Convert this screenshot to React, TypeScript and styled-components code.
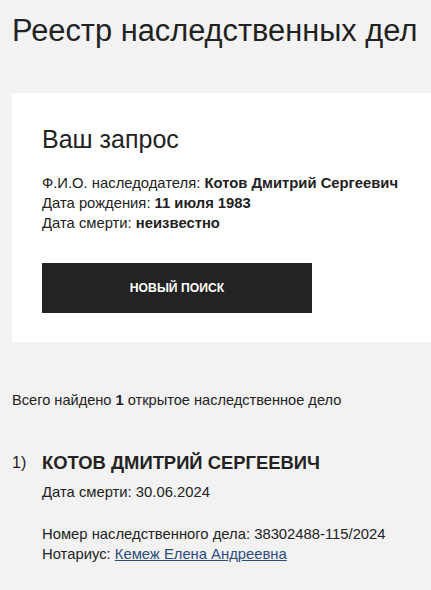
import styled, { createGlobalStyle } from "styled-components";

const GlobalStyle = createGlobalStyle`
  html, body {
    margin: 0;
    padding: 0;
    background: #f2f2f2;
  }
  body {
    font-family: "Liberation Sans", Arial, sans-serif;
    color: #222;
  }
`;

const Page = styled.div`
  padding: 12px 0 30px 12px;
`;

const Title = styled.h1`
  margin: 0;
  font-size: 30.8px;
  font-weight: 400;
  line-height: 38px;
`;

const Card = styled.section`
  margin-top: 43px;
  background: #fff;
  padding: 30px 30px 29px 30px;
`;

const CardTitle = styled.h2`
  margin: 0;
  font-size: 25px;
  font-weight: 400;
  line-height: 32px;
`;

const InfoList = styled.div`
  margin-top: 18px;
  font-size: 14.8px;
  line-height: 20px;
`;

const InfoRow = styled.div`
  b {
    font-weight: 700;
  }
`;

const Button = styled.button`
  margin-top: 30px;
  display: flex;
  align-items: center;
  justify-content: center;
  width: 270px;
  height: 50px;
  border: none;
  background: #232323;
  color: #fff;
  font-family: inherit;
  font-size: 12.2px;
  font-weight: 700;
  text-transform: uppercase;
  cursor: pointer;
`;

const Summary = styled.p`
  margin: 48px 0 0;
  font-size: 14.6px;
  line-height: 20px;
`;

const CaseItem = styled.div`
  margin-top: 40px;
  display: grid;
  grid-template-columns: 30px 1fr;
`;

const Num = styled.div`
  font-size: 16px;
  line-height: 26px;
`;

const CaseName = styled.div`
  font-size: 18.4px;
  font-weight: 700;
  line-height: 26px;
  text-transform: uppercase;
`;

const CaseLine = styled.div<{ $gap?: number }>`
  margin-top: ${(p) => p.$gap ?? 0}px;
  font-size: 14.8px;
  line-height: 20px;
`;

const NotaryLink = styled.a`
  color: #2b4d7e;
  text-decoration: underline;
`;

export default function App() {
  return (
    <>
      <GlobalStyle />
      <Page>
        <Title>Реестр наследственных дел</Title>
        <Card>
          <CardTitle>Ваш запрос</CardTitle>
          <InfoList>
            <InfoRow>
              Ф.И.О. наследодателя: <b>Котов Дмитрий Сергеевич</b>
            </InfoRow>
            <InfoRow>
              Дата рождения: <b>11 июля 1983</b>
            </InfoRow>
            <InfoRow>
              Дата смерти: <b>неизвестно</b>
            </InfoRow>
          </InfoList>
          <Button>Новый поиск</Button>
        </Card>
        <Summary>
          Всего найдено <b>1</b> открытое наследственное дело
        </Summary>
        <CaseItem>
          <Num>1)</Num>
          <div>
            <CaseName>Котов Дмитрий Сергеевич</CaseName>
            <CaseLine $gap={6}>Дата смерти: 30.06.2024</CaseLine>
            <CaseLine $gap={22}>
              Номер наследственного дела: 38302488-115/2024
            </CaseLine>
            <CaseLine>
              Нотариус: <NotaryLink href="#">Кемеж Елена Андреевна</NotaryLink>
            </CaseLine>
          </div>
        </CaseItem>
      </Page>
    </>
  );
}
